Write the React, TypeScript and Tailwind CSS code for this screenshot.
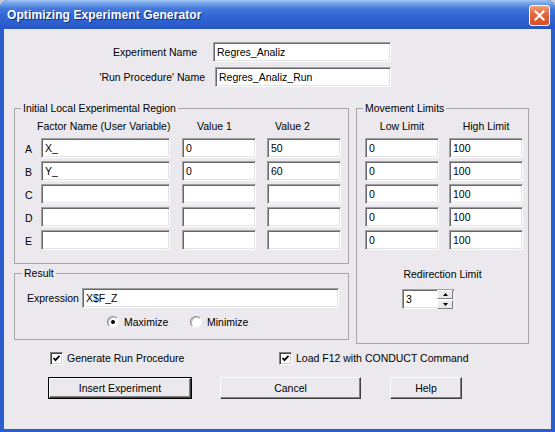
import React from 'react';

const font = { fontFamily: '"Liberation Sans", Arial, sans-serif' };

function Field({ value, className = '' }: { value?: string; className?: string }) {
  return (
    <div
      className={`h-[20px] shrink-0 bg-white border border-t-[#a0a0a0] border-l-[#a0a0a0] border-b-white border-r-white shadow-[inset_1px_1px_0_#696969,inset_-1px_-1px_0_#e3e3e3] pl-[3px] flex items-center whitespace-nowrap overflow-hidden ${className}`}
    >
      {value}
    </div>
  );
}

function Radio({ checked, label }: { checked?: boolean; label: string }) {
  return (
    <div className="flex items-center">
      <div className="w-[12px] h-[12px] rounded-full bg-white border border-t-[#8a8a8a] border-l-[#8a8a8a] border-b-[#f4f4f4] border-r-[#f4f4f4] shadow-[inset_1px_1px_0_#c8c8c8] flex items-center justify-center">
        {checked && <div className="w-[4px] h-[4px] rounded-full bg-black" />}
      </div>
      <span className="ml-[5px]">{label}</span>
    </div>
  );
}

function Check({ label }: { label: string }) {
  return (
    <div className="flex items-center">
      <div className="w-[13px] h-[13px] bg-white border border-t-[#808080] border-l-[#808080] border-b-white border-r-white shadow-[inset_1px_1px_0_#404040,inset_-1px_-1px_0_#d4d0c8] flex items-center justify-center">
        <svg width="9" height="9" viewBox="0 0 9 9">
          <path d="M1.5 4 L3.5 6.2 L7.5 1.8" stroke="#000" strokeWidth="1.8" fill="none" />
        </svg>
      </div>
      <span className="ml-[4px]">{label}</span>
    </div>
  );
}

function Button({ label, width, isDefault }: { label: string; width: string; isDefault?: boolean }) {
  return (
    <div className={`${width} h-[22px] shrink-0 ${isDefault ? 'border border-black' : ''}`}>
      <div className="h-full w-full border border-t-white border-l-white border-b-[#404040] border-r-[#404040] shadow-[inset_-1px_-1px_0_#808080] flex items-center justify-center">
        {label}
      </div>
    </div>
  );
}

function SpinButton({ up }: { up?: boolean }) {
  return (
    <div className="w-[16px] h-[9px] bg-[#ebe9ed] border border-t-white border-l-white border-b-[#808080] border-r-[#808080] flex items-center justify-center">
      <svg width="5" height="3" viewBox="0 0 5 3">
        <path d={up ? 'M2.5 0 L5 3 L0 3 Z' : 'M0 0 L5 0 L2.5 3 Z'} fill="#000" />
      </svg>
    </div>
  );
}

const factors = [
  { id: 'A', name: 'X_', v1: '0', v2: '50' },
  { id: 'B', name: 'Y_', v1: '0', v2: '60' },
  { id: 'C', name: '', v1: '', v2: '' },
  { id: 'D', name: '', v1: '', v2: '' },
  { id: 'E', name: '', v1: '', v2: '' },
];

export default function App() {
  return (
    <div className="w-[555px] h-[432px] bg-[#c4cad6]" style={font}>
      <div className="w-[555px] h-[432px] rounded-t-[8px] bg-[#2b5dcf] flex flex-col overflow-hidden">
        {/* Title bar */}
        <div className="h-[29px] shrink-0 flex items-center justify-between pl-[7px] pr-[5px] bg-[linear-gradient(180deg,#a4c6f4_0%,#76a6ea_10%,#4478dc_30%,#3266d3_55%,#2c5ecd_80%,#2654c2_100%)]">
          <span className="text-white font-bold text-[12px] [text-shadow:1px_1px_0_#10307a] tracking-[0.1px]">
            Optimizing Experiment Generator
          </span>
          <div className="w-[21px] h-[21px] rounded-[3px] border border-white bg-[linear-gradient(180deg,#f0a080_0%,#e2683e_40%,#d2502a_100%)] flex items-center justify-center mt-[2px]">
            <svg width="11" height="11" viewBox="0 0 11 11">
              <path d="M1.5 1.5 L9.5 9.5 M9.5 1.5 L1.5 9.5" stroke="#fff" strokeWidth="2.2" strokeLinecap="square" />
            </svg>
          </div>
        </div>

        {/* Client area */}
        <div className="ml-[4px] mr-[4px] h-[400px] bg-[#ebe9ed] text-[10.5px] text-black leading-[13px] flex flex-col pt-[13px]">
          <div className="flex items-center h-[20px]">
            <span className="w-[193px] text-right">Experiment Name</span>
            <Field value="Regres_Analiz" className="ml-[16px] w-[178px]" />
          </div>
          <div className="flex items-center h-[20px] mt-[5px]">
            <span className="w-[201px] text-right">'Run Procedure' Name</span>
            <Field value="Regres_Analiz_Run" className="ml-[10px] w-[176px]" />
          </div>

          <div className="flex items-start mt-[15px]">
            {/* Left column */}
            <div className="ml-[10px] w-[335px] flex flex-col">
              <fieldset className="border border-[#a6a6a6] pb-[13px]">
                <legend className="ml-[6px] px-[2px] leading-[13px]">Initial Local Experimental Region</legend>
                <div className="h-[23px] flex items-center pl-[22px]">
                  <span className="w-[160px]">Factor Name (User Variable)</span>
                  <span className="w-[78px]">Value 1</span>
                  <span>Value 2</span>
                </div>
                <div className="flex flex-col gap-[3px]">
                  {factors.map((f) => (
                    <div key={f.id} className="flex items-center h-[20px]">
                      <span className="w-[26px] pl-[10px] pt-[3px]">{f.id}</span>
                      <Field value={f.name} className="w-[129px]" />
                      <Field value={f.v1} className="ml-[12px] w-[74px]" />
                      <Field value={f.v2} className="ml-[11px] w-[74px]" />
                    </div>
                  ))}
                </div>
              </fieldset>

              <fieldset className="border border-[#a6a6a6] mt-[3px] pb-[10px]">
                <legend className="ml-[7px] px-[2px] leading-[13px]">Result</legend>
                <div className="flex items-center h-[20px] mt-[8px] pl-[12px]">
                  <span className="w-[55px]">Expression</span>
                  <Field value="X$F_Z" className="w-[257px]" />
                </div>
                <div className="flex items-center h-[14px] mt-[7px] pl-[92px]">
                  <div className="w-[83px]">
                    <Radio checked label="Maximize" />
                  </div>
                  <Radio label="Minimize" />
                </div>
              </fieldset>
            </div>

            {/* Right column */}
            <fieldset className="ml-[7px] w-[173px] border border-[#a6a6a6] pb-[34px]">
              <legend className="ml-[6px] px-[2px] leading-[13px]">Movement Limits</legend>
              <div className="h-[23px] flex items-center pl-[8px]">
                <span className="w-[74px] text-center">Low Limit</span>
                <span className="w-[74px] ml-[10px] text-center">High Limit</span>
              </div>
              <div className="flex flex-col gap-[3px]">
                {factors.map((f) => (
                  <div key={f.id} className="flex items-center h-[20px] pl-[8px]">
                    <Field value="0" className="w-[74px]" />
                    <Field value="100" className="ml-[10px] w-[74px]" />
                  </div>
                ))}
              </div>
              <div className="mt-[18px] text-center">Redirection Limit</div>
              <div className="mt-[8px] ml-[45px] w-[53px] h-[20px] bg-white border border-t-[#a0a0a0] border-l-[#a0a0a0] border-b-white border-r-white shadow-[inset_1px_1px_0_#696969,inset_-1px_-1px_0_#e3e3e3] flex items-center justify-between pl-[3px] pr-[1px]">
                <span>3</span>
                <div className="flex flex-col gap-[1px]">
                  <SpinButton up />
                  <SpinButton />
                </div>
              </div>
            </fieldset>
          </div>

          <div className="flex items-center h-[13px] mt-[8px] ml-[46px]">
            <div className="w-[229px]">
              <Check label="Generate Run Procedure" />
            </div>
            <Check label="Load F12 with CONDUCT Command" />
          </div>

          <div className="flex items-center mt-[12px] ml-[44px]">
            <Button label="Insert Experiment" width="w-[144px]" isDefault />
            <div className="ml-[28px]">
              <Button label="Cancel" width="w-[141px]" />
            </div>
            <div className="ml-[29px]">
              <Button label="Help" width="w-[72px]" />
            </div>
          </div>
        </div>
      </div>
    </div>
  );
}
